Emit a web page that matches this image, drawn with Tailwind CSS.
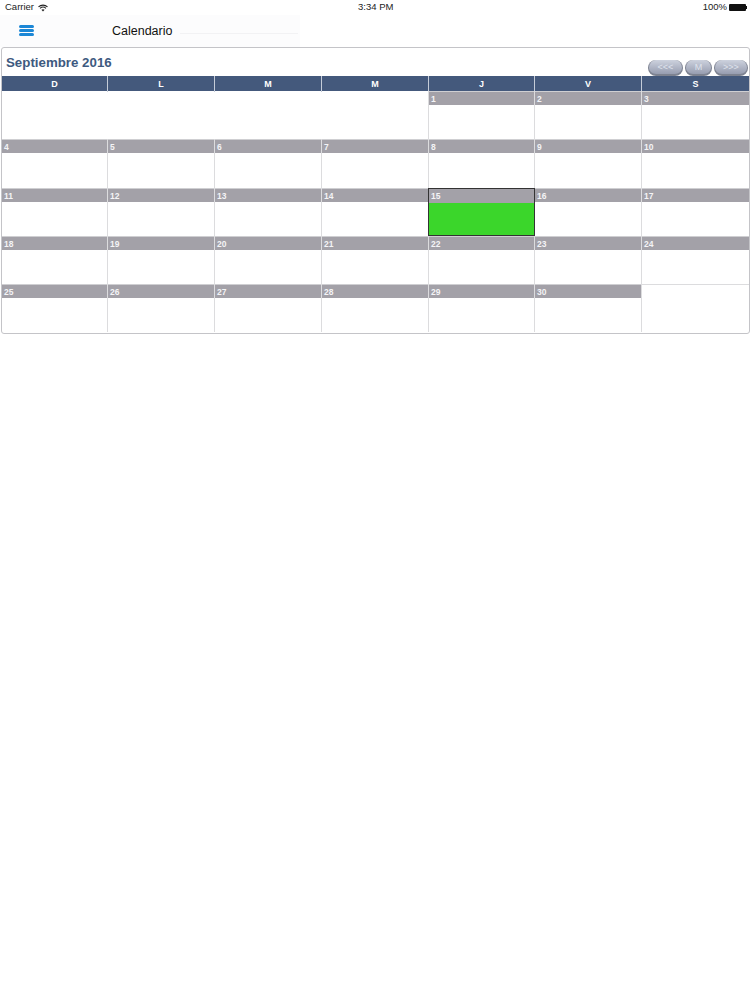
<!DOCTYPE html>
<html lang="en">
<head>
    <meta charset="UTF-8">
    <title>Calendario</title>
    <script src="https://cdn.jsdelivr.net/npm/@tailwindcss/browser@4"></script>
</head>
<body class="bg-white font-['Liberation_Sans',Arial,sans-serif]">
    <div class="w-[750px] h-[1000px] overflow-hidden relative">
        <!-- status bar -->
        <div class="h-[15px] flex items-center justify-between pl-[5px] pr-[3px] text-[9.5px] text-[#222] relative">
            <div class="flex items-center gap-[4px]">
                <span>Carrier</span>
                <svg width="10" height="8" viewBox="0 0 10 8" fill="none" stroke="#222" stroke-width="1.1">
                    <path d="M0.5 2.8C3 0.5 7 0.5 9.5 2.8"/>
                    <path d="M2 4.3C3.8 2.8 6.2 2.8 8 4.3"/>
                    <path d="M5 7.6L3.4 5.8C4.4 5 5.6 5 6.6 5.8Z" fill="#222" stroke="none"/>
                </svg>
            </div>
            <span class="absolute left-[358px] text-[9.5px] font-medium">3:34 PM</span>
            <div class="flex items-center gap-[2px]">
                <span>100%</span>
                <div class="flex items-center">
                    <div class="w-[17px] h-[7px] bg-[#111] rounded-[1px]"></div>
                    <div class="w-[1px] h-[3px] bg-[#111]"></div>
                </div>
            </div>
        </div>

        <!-- nav bar -->
        <div class="h-[32px] w-[300px] bg-[#fcfcfd] flex items-center relative">
            <div class="w-[15px] ml-[19px] mb-[1px] flex flex-col gap-[1px]">
                <div class="h-[3px] bg-[#1c87d6] rounded-full"></div>
                <div class="h-[3px] bg-[#1c87d6] rounded-full"></div>
                <div class="h-[3px] bg-[#1c87d6] rounded-full"></div>
            </div>
            <span class="ml-[78px] text-[12.5px] text-[#111]">Calendario</span>
            <div class="absolute left-[180px] top-[18px] w-[118px] h-px bg-[#f2f2f4]"></div>
        </div>

        <!-- calendar -->
        <div class="ml-px w-[749px] h-[287px] border border-[#c4c4c8] rounded-[3px] overflow-hidden">
            <div class="h-[28px] flex items-start justify-between pr-[1px]">
                <h1 class="ml-[4px] mt-[6px] text-[13.3px] leading-[18px] font-bold text-[#3e5a80]">Septiembre 2016</h1>
                <div class="flex gap-[2px] mt-[12px]">
                    <button class="w-[35px] h-[16px] rounded-full text-[9px] leading-none text-[#dfe3ec] bg-gradient-to-b from-[#cdd2de] to-[#979db0] border-b-2 border-x border-[#7d8290]">&lt;&lt;&lt;</button>
                    <button class="w-[27px] h-[16px] rounded-full text-[9px] leading-none text-[#dfe3ec] bg-gradient-to-b from-[#cdd2de] to-[#979db0] border-b-2 border-x border-[#7d8290]">M</button>
                    <button class="w-[34px] h-[16px] rounded-full text-[9px] leading-none text-[#dfe3ec] bg-gradient-to-b from-[#cdd2de] to-[#979db0] border-b-2 border-x border-[#7d8290]">&gt;&gt;&gt;</button>
                </div>
            </div>
            <div id="head" class="grid grid-cols-[106px_107px_107px_107px_106px_107px_107px] h-[15px] bg-[#44597c] text-[9px] font-bold text-white text-center leading-[16px]"></div>
            <div id="rows"></div>
        </div>
    </div>

    <script>
        const days = ['D', 'L', 'M', 'M', 'J', 'V', 'S'];
        document.getElementById('head').innerHTML = days.map((d, i) =>
            `<div class="${i < 6 ? 'border-r border-[#c5ccd8]' : ''}">${d}</div>`
        ).join('');

        // September 2016 starts on a Thursday
        const cells = [];
        for (let i = 0; i < 4; i++) cells.push(null);
        for (let d = 1; d <= 30; d++) cells.push(d);
        cells.push(null);

        const rowsEl = document.getElementById('rows');
        for (let r = 0; r < 5; r++) {
            const row = document.createElement('div');
            row.className = 'grid grid-cols-[106px_107px_107px_107px_106px_107px_107px] h-[48.25px]';
            cells.slice(r * 7, r * 7 + 7).forEach((d, i) => {
                const cell = document.createElement('div');
                const line = i < 6 ? 'border-r border-[#dcdcde]' : '';
                if (d === null) {
                    // leading blanks only show the line next to the 1st
                    if (r === 4) cell.className = 'h-full border-t border-[#dcdcde]';
                    else cell.className = i === 3 ? `h-full ${line}` : 'h-full';
                } else if (d === 15) {
                    cell.className = 'h-[48.5px] border border-[#333] flex flex-col relative z-10 -ml-px';
                    cell.innerHTML = `<div class="h-[14px] bg-[#a3a1a8] text-[8.5px] font-bold text-[#f4f4f6] leading-[15px] pl-[2px]">15</div><div class="flex-1 bg-[#3bd62b]"></div>`;
                } else {
                    cell.className = `h-full ${line}`;
                    cell.innerHTML = `<div class="h-[14px] bg-[#a3a1a8] border-t border-[#cfcfd2] text-[8.5px] font-bold text-[#f4f4f6] leading-[14px] pl-[2px]">${d}</div>`;
                }
                row.appendChild(cell);
            });
            rowsEl.appendChild(row);
        }
    </script>
</body>
</html>
